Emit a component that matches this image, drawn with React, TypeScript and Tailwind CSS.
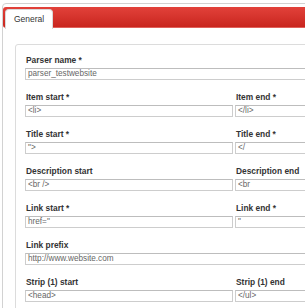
import React from "react";

type Field = { label: string; value: string };

const rows: (Field | [Field, Field])[] = [
  { label: "Parser name *", value: "parser_testwebsite" },
  [
    { label: "Item start *", value: "<li>" },
    { label: "Item end *", value: "</li>" },
  ],
  [
    { label: "Title start *", value: '">' },
    { label: "Title end *", value: "</" },
  ],
  [
    { label: "Description start", value: "<br />" },
    { label: "Description end", value: "<br" },
  ],
  [
    { label: "Link start *", value: 'href="' },
    { label: "Link end *", value: '"' },
  ],
  { label: "Link prefix", value: "http://www.website.com" },
  [
    { label: "Strip (1) start", value: "<head>" },
    { label: "Strip (1) end", value: "</ul>" },
  ],
];

function FormField({ field }: { field: Field }) {
  return (
    <div className="flex flex-col">
      <label className="pl-[1px] text-[8.4px] leading-[10px] font-bold text-[#333]">
        {field.label}
      </label>
      <div className="mt-[3px] h-[12px] border border-[#cdcdcd] border-t-[#bdbdbd] bg-white px-[2px] text-[8.2px] leading-[10px] text-[#666] whitespace-pre">
        {field.value}
      </div>
    </div>
  );
}

export default function App() {
  return (
    <div className="w-[305px] h-[308px] overflow-hidden bg-white pl-[2px] pt-[3px] font-['Liberation_Sans',Arial,sans-serif]">
      <div className="w-[360px] h-[340px] border border-[#d2d2d2] rounded-[4px] pt-[3px]">
        {/* tab strip */}
        <div className="h-[21px] rounded-[3px] bg-gradient-to-b from-[#e2413a] to-[#c9251e] border-b border-[#e0605a] pl-[2px] pt-[2px]">
          <div className="w-[48px] h-[20px] bg-white rounded-t-[4px] border border-b-0 border-[#d9d9d9] pl-[8px] pt-[4px] text-[8.5px] leading-[11px] text-[#333]">
            General
          </div>
        </div>

        <div className="ml-[12px] mt-[16px] w-[400px] border border-[#dcdcdc] rounded-[3px] pl-[9px] pt-[10px]">
          {rows.map((row, i) => (
            <div key={i} className="mb-[12px]">
              {Array.isArray(row) ? (
                <div className="grid grid-cols-[208px_1fr] gap-x-[2px]">
                  <FormField field={row[0]} />
                  <FormField field={row[1]} />
                </div>
              ) : (
                <FormField field={row} />
              )}
            </div>
          ))}
        </div>
      </div>
    </div>
  );
}
